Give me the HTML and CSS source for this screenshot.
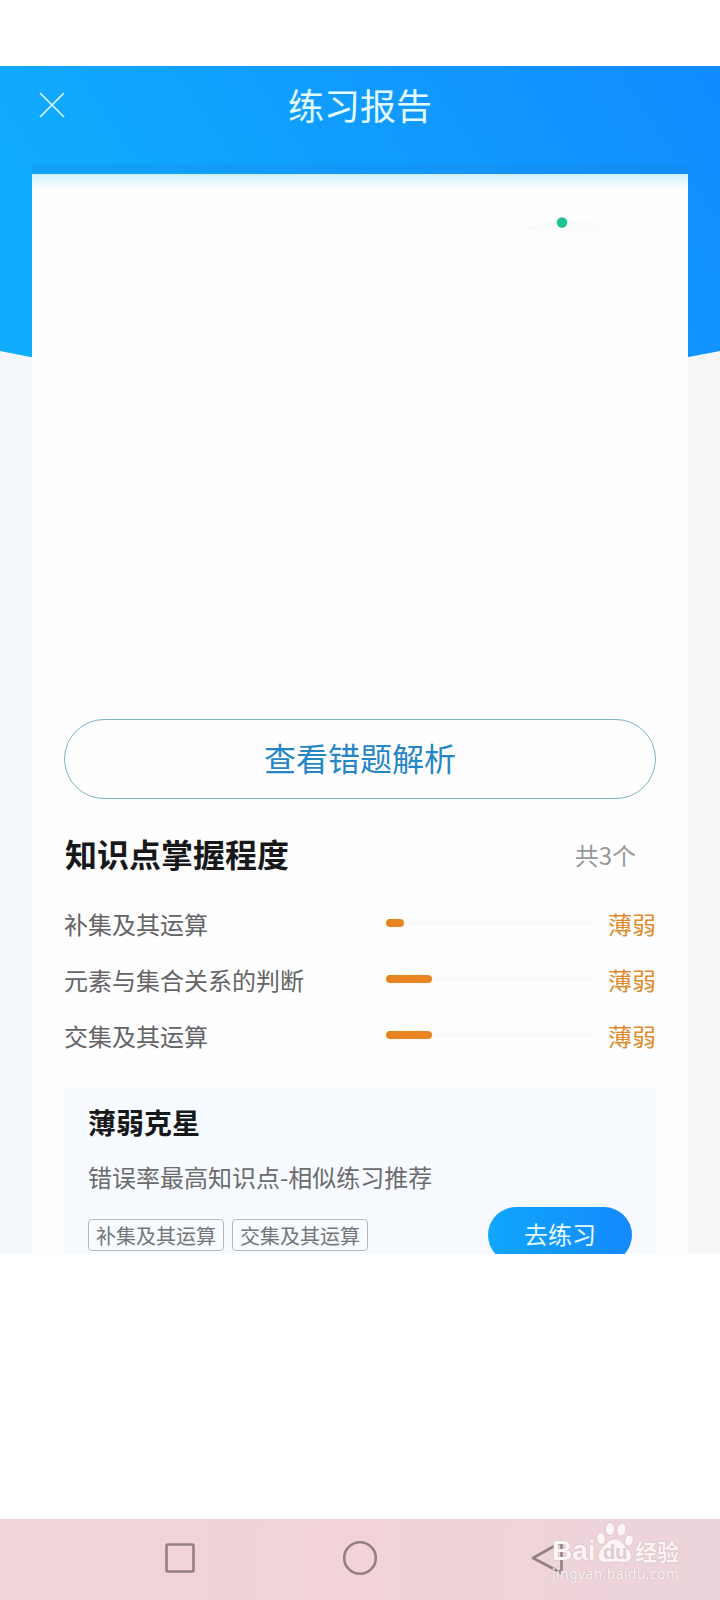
FILE: index.html
```html
<!DOCTYPE html>
<html lang="zh-CN">
<head>
<meta charset="utf-8">
<title>练习报告</title>
<link rel="stylesheet" href="styles.css">
</head>
<body>
<main class="report">
  <svg class="backdrop" width="720" height="330" viewBox="0 0 720 330" aria-hidden="true">
    <defs>
      <linearGradient id="sky" x1="0" y1="0.3" x2="1" y2="0">
        <stop offset="0" stop-color="#10acfd"/>
        <stop offset="1" stop-color="#118bff"/>
      </linearGradient>
    </defs>
    <path d="M0 0H720V285Q360 359 0 285Z" fill="url(#sky)"/>
  </svg>
  <header class="topbar">
    <svg class="close" width="26" height="26" viewBox="0 0 26 26"><path d="M1 1L25 25M25 1L1 25" fill="none" stroke="#d5fbff" stroke-width="1.7"/></svg>
    <h1 class="title">练习报告</h1>
  </header>
  <section class="card">
    <div class="summary">
      <svg class="gauge" width="100" height="18" viewBox="0 0 100 18">
        <path d="M8 14Q28 6 46 3H76L98 14Z" fill="#fbfbfb"/>
        <circle cx="52" cy="5.500" r="5.200" fill="#1cc394"/>
      </svg>
    </div>
    <a class="review">查看错题解析</a>
    <div class="section-head">
      <h2 class="section-title">知识点掌握程度</h2>
      <span class="count">共3个</span>
    </div>
    <ul class="points">
      <li class="point"><span class="name">补集及其运算</span><span class="track"><i class="fill" style="width:18px"></i></span><span class="level">薄弱</span></li>
      <li class="point"><span class="name">元素与集合关系的判断</span><span class="track"><i class="fill" style="width:46px"></i></span><span class="level">薄弱</span></li>
      <li class="point"><span class="name">交集及其运算</span><span class="track"><i class="fill" style="width:46px"></i></span><span class="level">薄弱</span></li>
    </ul>
    <div class="boost">
      <h3 class="boost-title">薄弱克星</h3>
      <p class="boost-text">错误率最高知识点-相似练习推荐</p>
      <div class="boost-row">
        <span class="tag">补集及其运算</span>
        <span class="tag">交集及其运算</span>
        <a class="go">去练习</a>
      </div>
    </div>
  </section>
</main>
<nav class="sysbar">
  <svg class="keys" width="720" height="81" viewBox="0 0 720 81" fill="none" stroke="#928082" stroke-width="2.6">
    <rect x="166.500" y="25.500" width="27" height="27" rx="1"/>
    <circle cx="360" cy="39" r="15.800"/>
    <path d="M533 39L561.500 23V54Z" stroke-linejoin="round"/>
  </svg>
  <div class="mark">
    <div class="mark-top">
      <span class="mark-bai">Bai</span>
      <span class="paw">
        <svg width="38" height="42" viewBox="0 0 38 42" fill="#fdf4f6" stroke="#d5bfc5" stroke-width=".7">
          <ellipse cx="5" cy="16.500" rx="4.300" ry="6" transform="rotate(-12 5 16.500)"/>
          <ellipse cx="14" cy="7" rx="4.500" ry="6.500"/>
          <ellipse cx="25.500" cy="7.500" rx="4.500" ry="6.500" transform="rotate(10 25.500 7.500)"/>
          <ellipse cx="33" cy="18.500" rx="4.300" ry="5.800" transform="rotate(15 33 18.500)"/>
          <path d="M19 17C25 17 27 22 32 27C39 34 34 42 26 40.500Q19 39 12 40.500C3 42 -1 34 5 27C10 22 12 17 19 17Z"/>
        </svg>
        <span class="paw-text">du</span>
      </span>
      <span class="mark-cn">经验</span>
    </div>
    <div class="mark-url">jingyan.baidu.com</div>
  </div>
</nav>
</body>
</html>
```
FILE: styles.css
```css
* { box-sizing: border-box; }

body {
  margin: 0;
  width: 720px;
  height: 1600px;
  display: flex;
  flex-direction: column;
  justify-content: space-between;
  background: #fff;
  font-family: "Noto Sans CJK SC", sans-serif;
  overflow: hidden;
}

h1, h2, h3, p, ul { margin: 0; padding: 0; }

.report {
  position: relative;
  isolation: isolate;
  margin-top: 66px;
  height: 1188px;
  overflow: hidden;
  background: linear-gradient(90deg, #f4f8fc 0, #f7f9fb 50%, #f6f8f8 100%);
}

.backdrop { position: absolute; inset: 0 auto auto 0; z-index: -1; }

.topbar {
  height: 108px;
  margin: 0 32px;
  padding: 0 7px 28px;
  display: grid;
  grid-template-columns: 26px 1fr 26px;
  align-items: center;
  background: linear-gradient(transparent 97px, rgba(20, 130, 220, .28) 100px, rgba(20, 140, 230, .2));
}

.close { display: block; margin-top: -2px; }

.title {
  margin-top: -4px;
  text-align: center;
  font-size: 36px;
  line-height: 52px;
  font-weight: 400;
  color: #e2fdff;
}

.card {
  margin: 0 32px;
  height: 1080px;
  padding: 0 32px;
  background: linear-gradient(#cdeefe, #e9f7fe 8px, #fefefe 15px);
}

.summary { height: 545px; padding: 42px 46px 0 0; text-align: right; }

.gauge { display: inline-block; }

.review {
  display: flex;
  align-items: center;
  justify-content: center;
  height: 80px;
  padding-bottom: 4px;
  border: 1px solid #80b5c6;
  border-radius: 40px;
  font-size: 32px;
  color: #2586c7;
}

.section-head {
  height: 98px;
  padding: 10px 20px 0 1px;
  display: flex;
  justify-content: space-between;
  align-items: center;
}

.section-title { font-size: 32px; font-weight: 700; color: #17181a; }

.count { padding-top: 2px; font-size: 24px; color: #99999b; }

.points { list-style: none; height: 191px; }

.point {
  height: 56px;
  display: grid;
  grid-template-columns: 322px 206px 1fr;
  align-items: center;
  font-size: 24px;
}

.name { padding-bottom: 4px; color: #646466; }

.track {
  height: 4px;
  margin-top: -4px;
  display: flex;
  align-items: center;
  background: #fbf9f9;
  border-radius: 2px;
}

.fill { height: 8px; border-radius: 4px; background: #e98423; }

.level { padding-bottom: 4px; text-align: right; color: #e08a2e; }

.boost {
  height: 200px;
  padding: 12px 24px 0;
  background: #f7fafe;
}

.boost-title { font-size: 28px; line-height: 44px; color: #17181a; }

.boost-text { margin-top: 15px; font-size: 24px; line-height: 36px; color: #6b6c6f; }

.boost-row { margin-top: 12px; display: flex; gap: 8px; align-items: center; }

.tag {
  width: 136px;
  height: 32px;
  padding-top: 1px;
  display: flex;
  align-items: center;
  justify-content: center;
  border: 1px solid #b6b8bb;
  border-radius: 4px;
  font-size: 20px;
  color: #747578;
}

.go {
  width: 144px;
  height: 56px;
  padding-bottom: 4px;
  margin-left: auto;
  display: flex;
  align-items: center;
  justify-content: center;
  border-radius: 28px;
  background: linear-gradient(90deg, #10a7fb, #1489fd);
  font-size: 24px;
  color: #e6faff;
}

.sysbar {
  position: relative;
  height: 81px;
  background: linear-gradient(90deg, #efd4da 0, #f1d3d8 50%, #ecd4db 100%);
}

.keys { display: block; }

/* Site mark lies over the back key */
.mark {
  position: absolute;
  left: 552px;
  top: 3px;
  width: 132px;
  color: #fdf4f6;
  text-shadow: 0 0 1px #c9b0b7, 0 0 1px #c9b0b7;
}

.mark-top { display: flex; height: 42px; align-items: flex-end; }

.mark-bai {
  width: 44px;
  font: 700 28px/26px "Liberation Sans", sans-serif;
}

.paw { position: relative; width: 39px; height: 42px; }

.paw-text {
  position: absolute;
  left: 7px;
  top: 20px;
  font: 700 20px/20px "Liberation Sans", sans-serif;
  color: #dfcbd1;
  text-shadow: none;
}

.mark-cn { font-size: 22px; line-height: 24px; padding-bottom: 2px; font-weight: 700; }

.mark-url {
  font: 14px/17px "Noto Sans", sans-serif;
  letter-spacing: .35px;
  margin-top: 1px;
}
```
